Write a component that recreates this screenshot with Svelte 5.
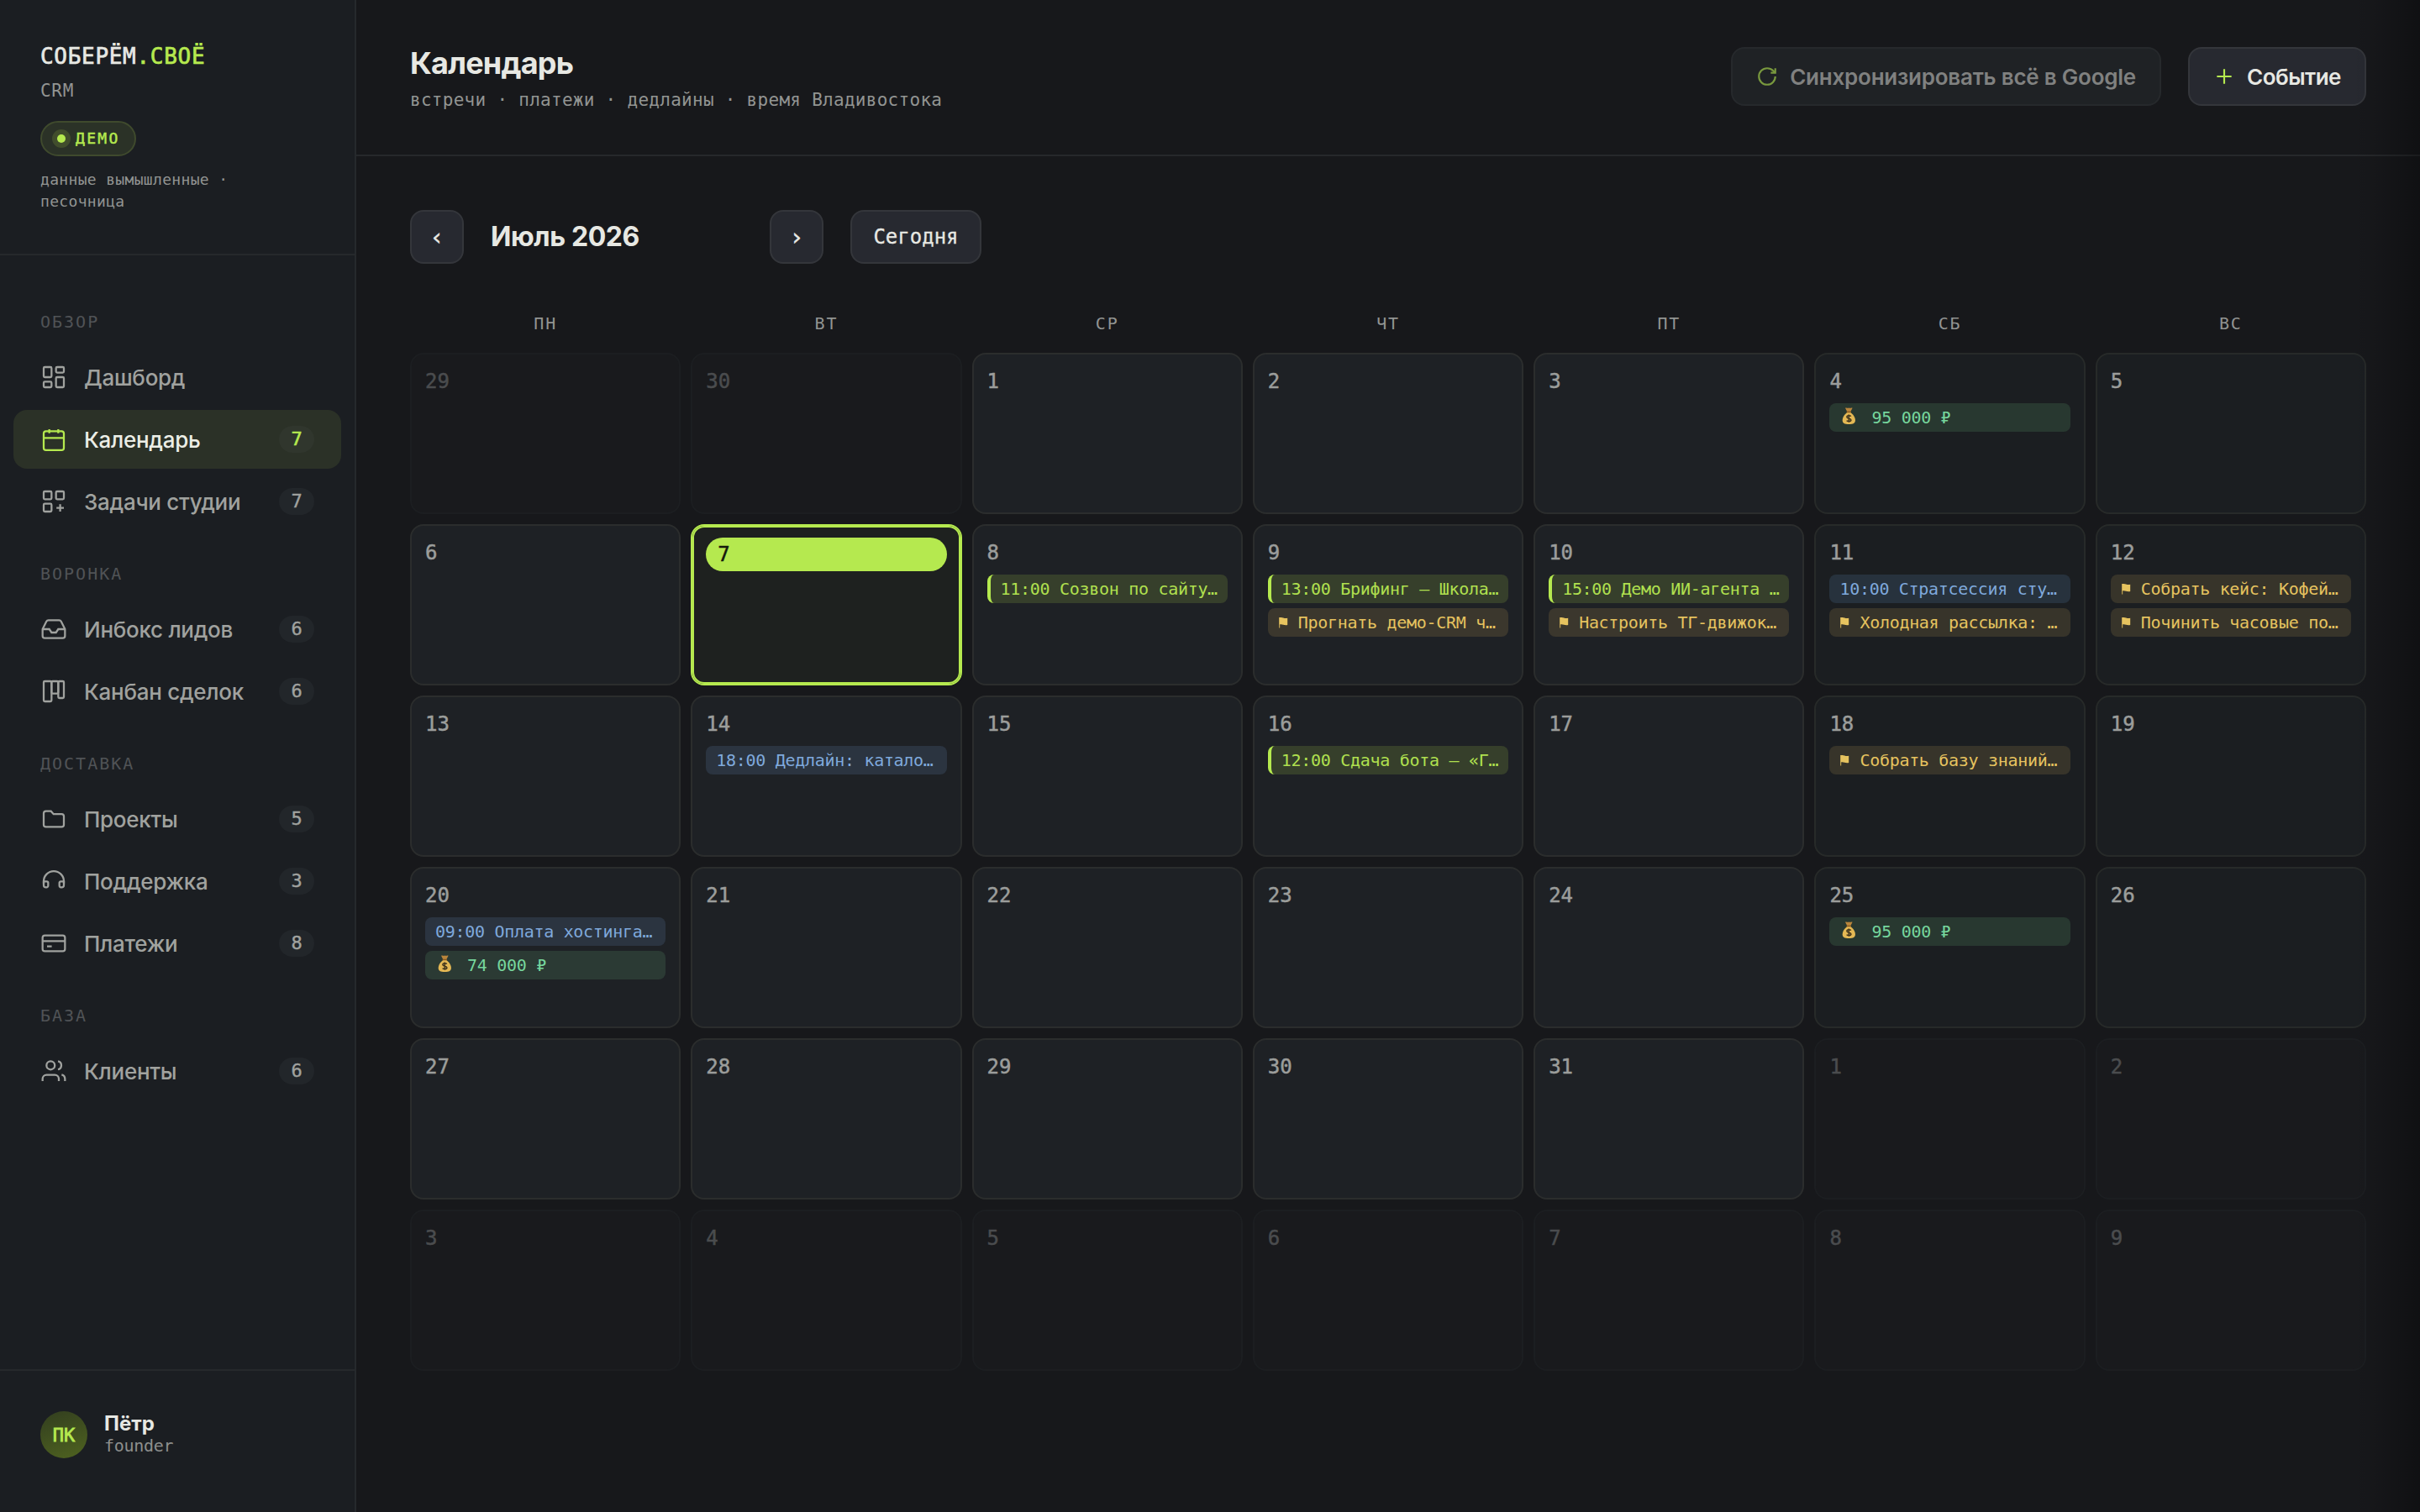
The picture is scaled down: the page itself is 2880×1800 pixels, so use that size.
<script>
  const groups = [
    { label: 'ОБЗОР', items: [
      { icon: 'dash', name: 'Дашборд' },
      { icon: 'cal', name: 'Календарь', count: 7, active: true },
      { icon: 'tasks', name: 'Задачи студии', count: 7 }
    ] },
    { label: 'ВОРОНКА', items: [
      { icon: 'inbox', name: 'Инбокс лидов', count: 6 },
      { icon: 'kanban', name: 'Канбан сделок', count: 6 }
    ] },
    { label: 'ДОСТАВКА', items: [
      { icon: 'folder', name: 'Проекты', count: 5 },
      { icon: 'head', name: 'Поддержка', count: 3 },
      { icon: 'card', name: 'Платежи', count: 8 }
    ] },
    { label: 'БАЗА', items: [{ icon: 'users', name: 'Клиенты', count: 6 }] }
  ];

  const weekdays = ['ПН', 'ВТ', 'СР', 'ЧТ', 'ПТ', 'СБ', 'ВС'];

  const events = {
    4: [['pay', '95 000 ₽']],
    8: [['meet', '11:00 Созвон по сайту…']],
    9: [['meet', '13:00 Брифинг — Школа…'], ['task', 'Прогнать демо-CRM ч…']],
    10: [['meet', '15:00 Демо ИИ-агента …'], ['task', 'Настроить ТГ-движок…']],
    11: [['note', '10:00 Стратсессия сту…'], ['task', 'Холодная рассылка: …']],
    12: [['task', 'Собрать кейс: Кофей…'], ['task', 'Починить часовые по…']],
    14: [['note', '18:00 Дедлайн: катало…']],
    16: [['meet', '12:00 Сдача бота — «Г…']],
    18: [['task', 'Собрать базу знаний…']],
    20: [['note', '09:00 Оплата хостинга…'], ['pay', '74 000 ₽']],
    25: [['pay', '95 000 ₽']]
  };

  // Six full weeks, starting on Monday 29 June
  const days = Array.from({ length: 42 }, (_, i) => {
    const n = i - 1;
    if (n < 1) return { n: 30 + n, out: true, list: [] };
    if (n > 31) return { n: n - 31, out: true, list: [] };
    return { n, out: false, today: n === 7, weekend: i % 7 > 4, list: events[n] ?? [] };
  });
</script>

{#snippet icon(name)}
  <svg class="icon" viewBox="0 0 24 24">
    {#if name === 'dash'}
      <rect x="3" y="3" width="7" height="9" rx="1" /><rect x="14" y="3" width="7" height="5" rx="1" />
      <rect x="14" y="12" width="7" height="9" rx="1" /><rect x="3" y="16" width="7" height="5" rx="1" />
    {:else if name === 'cal'}
      <rect x="3" y="4.7" width="18" height="17" rx="2" /><path d="M3 10.8h18M8 3v3.500M16 3v3.500" />
    {:else if name === 'tasks'}
      <rect x="3" y="3" width="7" height="7" rx="1" /><rect x="14" y="3" width="7" height="7" rx="1" />
      <rect x="3" y="14" width="7" height="7" rx="1" /><path d="M17.700 14.500v6.500M14.400 17.800h6.600" />
    {:else if name === 'inbox'}
      <path d="M22 12h-6l-2 3h-4l-2-3H2" />
      <path d="M5.45 5.11 2 12v6a2 2 0 0 0 2 2h16a2 2 0 0 0 2-2v-6l-3.45-6.89A2 2 0 0 0 16.76 4H7.24a2 2 0 0 0-1.79 1.11z" />
    {:else if name === 'kanban'}
      <rect x="3" y="3" width="7" height="18" rx="1" /><rect x="10" y="3" width="6" height="11" rx="1" /><rect x="16" y="3" width="5" height="15" rx="1" />
    {:else if name === 'folder'}
      <path d="M3 7a2 2 0 0 1 2-2h4.500l2.300 2.600H19a2 2 0 0 1 2 2V17a2 2 0 0 1-2 2H5a2 2 0 0 1-2-2z" />
    {:else if name === 'head'}
      <path d="M3 14v-1.900a9 9 0 0 1 18 0v1.900" />
      <path d="M3 12.300h2.800a1.200 1.200 0 0 1 1.200 1.200v2.500a1.500 1.500 0 0 1-1.500 1.500H5a2 2 0 0 1-2-2zM21 12.300h-2.800a1.200 1.200 0 0 0-1.200 1.200v2.500a1.500 1.500 0 0 0 1.500 1.500h.5a2 2 0 0 0 2-2z" />
    {:else if name === 'card'}
      <rect x="2" y="5" width="20" height="14" rx="2" /><path d="M2 10h20M6 14.800h4.200" />
    {:else if name === 'users'}
      <path d="M16.500 21v-2a3.500 3.500 0 0 0-3.500-3.500H5.500a3.500 3.500 0 0 0-3.500 3.500v2" /><circle cx="9.200" cy="7" r="3.700" />
      <path d="M22 21v-2a4 4 0 0 0-3-3.700M15.800 3.300a3.800 3.800 0 0 1 0 7.400" />
    {/if}
  </svg>
{/snippet}

<div class="app">
  <aside>
    <div class="brand">
      <div class="logo">СОБЕРЁМ<span>.СВОЁ</span></div>
      <div class="crm">CRM</div>
      <div class="demo"><i></i>ДЕМО</div>
      <p class="caption">данные вымышленные · песочница</p>
    </div>

    <nav>
      {#each groups as g}
        <section>
          <h4>{g.label}</h4>
          <ul>
            {#each g.items as it}
              <li class:active={it.active}>
                {@render icon(it.icon)}
                <span>{it.name}</span>
                {#if it.count}<b class="count">{it.count}</b>{/if}
              </li>
            {/each}
          </ul>
        </section>
      {/each}
    </nav>

    <footer>
      <div class="avatar">ПК</div>
      <div class="who"><strong>Пётр</strong><small>founder</small></div>
    </footer>
  </aside>

  <main>
    <header>
      <div>
        <h1>Календарь</h1>
        <p class="sub">встречи · платежи · дедлайны · время Владивостока</p>
      </div>
      <div class="actions">
        <button class="btn sync" disabled>
          <svg viewBox="0 0 24 24"><path d="M21 12a9 9 0 1 1-9-9c2.52 0 4.93 1 6.74 2.74L21 8" /><path d="M21 3v5h-5" /></svg>
          Синхронизировать всё в Google
        </button>
        <button class="btn">
          <svg viewBox="0 0 24 24"><path d="M4 12h16M12 4v16" /></svg>
          Событие
        </button>
      </div>
    </header>

    <div class="body">
      <div class="toolbar">
        <button class="sq">‹</button>
        <h2>Июль 2026</h2>
        <button class="sq">›</button>
        <button class="today-btn">Сегодня</button>
      </div>

      <div class="week">
        {#each weekdays as w}<span>{w}</span>{/each}
      </div>

      <div class="grid">
        {#each days as d}
          <div class="cell" class:out={d.out} class:today={d.today} class:weekend={d.weekend}>
            <div class="num">{d.n}</div>
            {#each d.list as [kind, text]}
              <div class="ev {kind}">
                {#if kind === 'task'}
                  <svg class="flag" viewBox="0 0 13 14"><path class="pole" d="M1.700 1v12.500" /><path d="M1.700 1.300c3.300-1.300 5.500 1.700 9.500.4v8.300c-4 1.200-6.200-1.600-9.500-.4z" /></svg>
                {:else if kind === 'pay'}
                  <svg class="bag" viewBox="0 0 26 22">
                    <path fill="#b9853c" d="M7 .8c1.500-.9 2.700.5 4.300-.3 1.600.8 2.800-.6 4.300.3L13.400 5H9.200z" />
                    <path fill="#e4b854" d="M9.300 6h4c3.200 2.200 5.600 5.800 5.600 9.300 0 3.500-2.300 4.700-7.600 4.700s-7.600-1.200-7.600-4.700C3.700 11.800 6.100 8.200 9.300 6z" />
                    <path fill="none" stroke="#8a5a1e" stroke-width="1.500" d="M8.600 5.500H14" />
                    <path fill="none" stroke="#40341c" stroke-width="1.500" d="M13.800 10.600c-.7-1-4.900-1.300-4.900.9 0 2.300 5 1.300 5 3.600 0 2.200-4.500 1.800-5.200.5M11.300 8.500v9.300" />
                  </svg>
                {/if}
                <span>{text}</span>
              </div>
            {/each}
          </div>
        {/each}
      </div>
    </div>
    <div class="edge"></div>
  </main>
</div>

<style>
  :global(body) { background: #17181b; }
  :global(*) { box-sizing: border-box; }
  .app {
    --lime: #b5e94f;
    --mono: 'DejaVu Sans Mono', 'Liberation Mono', monospace;
    --sans: Inter, 'Noto Sans', sans-serif;
    display: flex; width: 2880px; height: 1800px; overflow: hidden;
    background: #17181b; color: #e7e8e3; font-family: var(--sans);
  }
  h1, h2, h4, p, ul { margin: 0; padding: 0; font-weight: inherit; }
  button { font: inherit; color: inherit; margin: 0; padding: 0; }

  aside {
    width: 424px; flex: none; display: flex; flex-direction: column;
    background: #1b1e22; border-right: 2px solid #26292c; font-family: var(--mono);
  }
  .brand { height: 304px; padding: 52px 46px 0 48px; border-bottom: 2px solid #26292c; }
  .logo { font-size: 26px; line-height: 31px; letter-spacing: .7px; -webkit-text-stroke: .7px currentColor; }
  .logo span { color: var(--lime); }
  .crm { margin-top: 11px; font-size: 21px; line-height: 28px; letter-spacing: .7px; color: #929492; }
  .demo {
    display: flex; align-items: center; gap: 12px; width: 114px; height: 42px; margin-top: 22px; padding: 0 0 2px 18px;
    border: 2px solid #3f4a2d; border-radius: 21px; background: #2b3227;
    font-size: 18px; letter-spacing: 2.300px; color: var(--lime); -webkit-text-stroke: .5px currentColor;
  }
  .demo i { width: 10px; height: 10px; margin-top: 2px; border-radius: 50%; background: var(--lime); box-shadow: 0 0 0 6px #414d2c; }
  .caption { margin-top: 15px; font-size: 18px; line-height: 26px; letter-spacing: .33px; color: #929492; }

  nav { flex: 1; padding: 28px 16px 0; }
  h4 { height: 82px; padding: 37.500px 32px 0; font-size: 20px; line-height: 26px; letter-spacing: 2px; color: #505356; }
  ul { list-style: none; display: flex; flex-direction: column; gap: 4px; }
  li {
    display: flex; align-items: center; height: 70px; padding: 0 32px; border-radius: 16px;
    font-family: var(--sans); font-size: 26px; font-weight: 500; letter-spacing: -.28px; color: #a0a29f;
  }
  .icon { width: 32px; height: 32px; margin-right: 20px; fill: none; stroke: currentColor; stroke-width: 1.700; }
  .count {
    display: grid; place-items: center; width: 42px; height: 32px; margin-left: auto; border-radius: 16px;
    background: #22262a; font: 400 22px/32px var(--mono); -webkit-text-stroke: .4px currentColor;
  }
  .active { background: #2b3127; color: #eceee6; }
  .active .icon, .active .count { color: var(--lime); }
  .active .count { background: #30362d; -webkit-text-stroke-width: .6px; }

  footer { display: flex; align-items: center; gap: 20px; height: 170px; padding: 0 48px 16px; border-top: 2px solid #26292c; }
  .avatar {
    display: grid; place-items: center; width: 56px; height: 56px; border-radius: 50%;
    background: linear-gradient(160deg, #323e1f, #4f6320); color: var(--lime); font-size: 22px; -webkit-text-stroke: .8px currentColor;
  }
  .who { display: flex; flex-direction: column; padding-bottom: 2px; }
  .who strong { font: 700 24px/28px var(--sans); }
  .who small { font-size: 20px; line-height: 24px; letter-spacing: -.3px; color: #8d8f8d; }

  main { position: relative; flex: 1; display: flex; flex-direction: column; }
  header { display: flex; justify-content: space-between; height: 186px; padding: 56px 64px 0; border-bottom: 2px solid #26282b; }
  h1 { font-size: 36px; line-height: 38px; font-weight: 700; letter-spacing: -.8px; }
  .sub { margin-top: 11px; font: 21px/28px var(--mono); letter-spacing: .28px; color: #929492; }
  .actions { display: flex; gap: 32px; }
  .btn {
    display: flex; align-items: center; gap: 14px; height: 70px; padding: 0 28px; border-radius: 16px;
    border: 2px solid #34363b; background: #272930; font-size: 26px; font-weight: 600; letter-spacing: -.5px;
  }
  .btn svg { width: 26px; height: 26px; fill: none; stroke: var(--lime); stroke-width: 2; }
  .sync { border-color: #26292c; background: #1f2225; color: #808180; letter-spacing: -.23px; }
  .sync svg { opacity: .6; }

  .body { padding: 64px 64px 0; }
  .toolbar { display: flex; align-items: center; gap: 32px; }
  .sq, .today-btn {
    height: 64px; border: 2px solid #34363b; border-radius: 16px; background: #272930; font: 24px var(--mono);
  }
  .sq { width: 64px; font-size: 29px; -webkit-text-stroke: .3px currentColor; }
  .today-btn { width: 156px; -webkit-text-stroke: .3px currentColor; }
  h2 { width: 300px; padding-bottom: 2px; font-size: 32px; font-weight: 700; letter-spacing: -.4px; }
  .week, .grid { display: grid; grid-template-columns: repeat(7, minmax(0, 1fr)); gap: 12px; }
  .week { height: 106px; padding-top: 58px; font: 20px/26px var(--mono); letter-spacing: 1.800px; color: #929492; text-align: center; }
  .cell {
    display: flex; flex-direction: column; gap: 6px; height: 192px; padding: 14px 16px;
    border: 2px solid #2b2d2d; border-radius: 16px; background: #1e2125; color: #9b9d9b;
  }
  .weekend { background: #1b1e21; border-color: #272a29; }
  .out { background: #191a1d; border-color: #1c1e21; color: #4a4c4e; }
  .num { height: 38px; font: 24px/37px var(--mono); -webkit-text-stroke: .5px currentColor; }
  .today { background: #1e211f; border-color: var(--lime); box-shadow: inset 0 0 0 2px var(--lime); }
  .today .num { height: 40px; padding-left: 14px; border-radius: 20px; background: var(--lime); color: #14180c; line-height: 41px; }
  .ev {
    display: flex; align-items: center; height: 34px; padding: 0 12px; border-radius: 8px; overflow: hidden;
    font: 20px/34px var(--mono); letter-spacing: -.3px; white-space: pre;
  }
  .meet { border-left: 4px solid var(--lime); background: #363f2b; color: #b0e04f; }
  .note { background: #2b3440; color: #7fa9dc; }
  .task { background: #3b372d; color: #e6c35f; }
  .pay { background: #2b3a34; color: #76d69d; }
  .weekend .note { background: #27323d; }
  .weekend .task { background: #37342a; }
  .weekend .pay { background: #283830; }
  .flag { width: 13px; height: 14px; margin-right: 11px; flex: none; fill: currentColor; }
  .flag .pole { fill: none; stroke: currentColor; stroke-width: .9; }
  .bag { width: 26px; height: 22px; margin: 0 12px 2px 0; flex: none; }
  .edge {
    position: absolute; top: 0; right: 0; width: 80px; height: 100%; pointer-events: none;
    background: linear-gradient(90deg, transparent, rgba(0, 0, 0, .07) 35%, rgba(0, 0, 0, .32));
  }
</style>
